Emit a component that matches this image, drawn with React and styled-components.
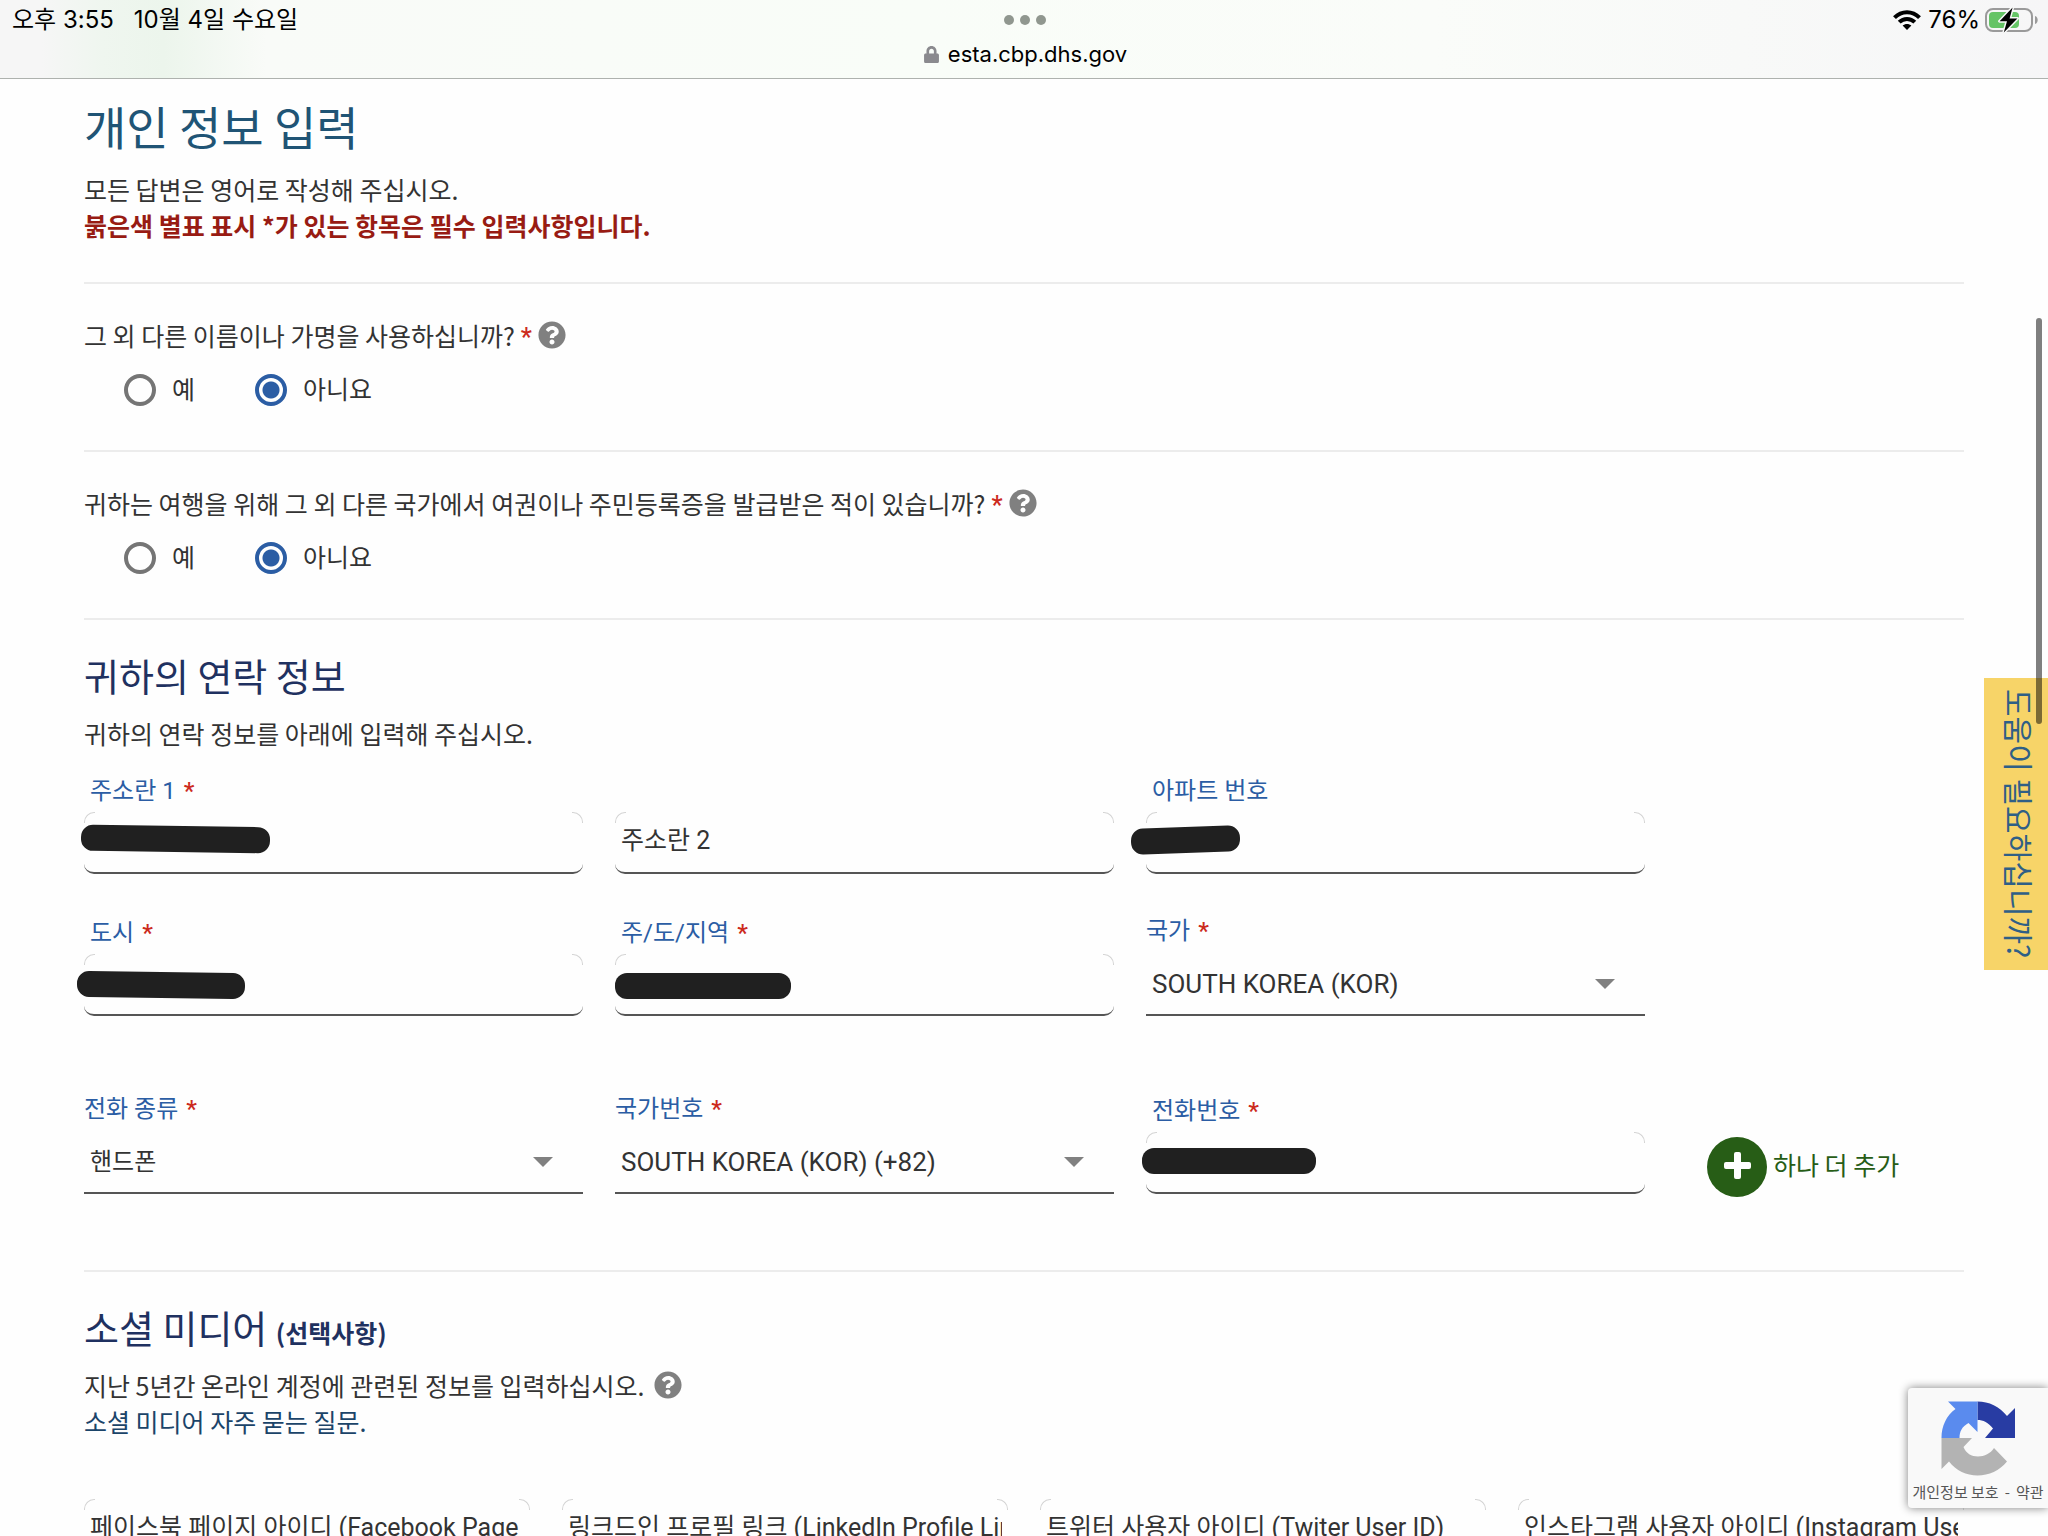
import React, { useState } from 'react';
import styled, { createGlobalStyle } from 'styled-components';
import { FaLock, FaQuestionCircle } from 'react-icons/fa';

const socialFields = [
  { id: 'facebook', text: '페이스북 페이지 아이디 (Facebook Page ID)' },
  { id: 'linkedin', text: '링크드인 프로필 링크 (LinkedIn Profile Link)' },
  { id: 'twitter', text: '트위터 사용자 아이디 (Twiter User ID)' },
  { id: 'instagram', text: '인스타그램 사용자 아이디 (Instagram User ID)' },
];

function StatusBar() {
  return (
    <TopBar>
      <StatusRow>
        <Clock>
          <span>오후 3:55</span>
          <span>10월 4일 수요일</span>
        </Clock>
        <Dots>
          <i />
          <i />
          <i />
        </Dots>
        <Indicators>
          <svg width="28" height="20" viewBox="0 0 28 20">
            <g fill="none" stroke="#000" strokeWidth="4">
              <path d="M1.5 7.6C8.5 0.4 19.5 0.4 26.5 7.6" />
              <path d="M6.2 12.2C10.6 7.8 17.4 7.8 21.8 12.2" />
            </g>
            <path d="M14 20L9.6 15.6C12 13.4 16 13.4 18.4 15.6Z" />
          </svg>
          <span>76%</span>
          <svg width="53" height="26" viewBox="0 0 53 26">
            <rect x="1" y="2" width="46" height="22" rx="7" fill="none" stroke="#9a9a9a" strokeWidth="2" />
            <path d="M50 9C53.6 10 53.6 16 50 17Z" fill="#9a9a9a" />
            <rect x="4" y="5" width="30" height="16" rx="4" fill="#65c466" />
            <path
              d="M27.6 0.6L14.6 14.2H22L18.8 25.4L32.4 11.4H24.6Z"
              stroke="#f9faf9"
              strokeWidth="3"
              paintOrder="stroke"
              strokeLinejoin="round"
            />
          </svg>
        </Indicators>
      </StatusRow>
      <Address>
        <FaLock size={17} color="#8a8a8e" />
        esta.cbp.dhs.gov
      </Address>
    </TopBar>
  );
}

function YesNo({ name, question }) {
  const [value, setValue] = useState('no');

  return (
    <Question aria-label={question}>
      <Legend>
        <span>
          {question}
          <Star>*</Star>
        </span>
        <FaQuestionCircle size={28} color="#808080" />
      </Legend>
      <Options>
        <Option>
          <Radio name={name} checked={value === 'yes'} onChange={() => setValue('yes')} />
          <span>예</span>
        </Option>
        <Option>
          <Radio name={name} checked={value === 'no'} onChange={() => setValue('no')} />
          <span>아니요</span>
        </Option>
      </Options>
    </Question>
  );
}

function TextField({ id, label, required, placeholder, mark }) {
  return (
    <Field>
      {label && (
        <Label htmlFor={id}>
          {label}
          {required && <Star>*</Star>}
        </Label>
      )}
      <InputBox>
        <Input id={id} placeholder={placeholder} aria-label={label ? undefined : placeholder} />
        {mark && <Mark {...mark} />}
      </InputBox>
    </Field>
  );
}

function SelectField({ id, label, value, size }) {
  return (
    <Field>
      <Label htmlFor={id} $select>
        {label}
        <Star>*</Star>
      </Label>
      <SelectBox>
        <Select id={id} $size={size}>
          <option>{value}</option>
        </Select>
      </SelectBox>
    </Field>
  );
}

function Recaptcha() {
  return (
    <Badge>
      <svg width="74" height="75" viewBox="0 0 74 75">
        <path d="M74 37V7L66 15C58.500 5.500 48 0.500 36.500 0.500V19C42 19 47.500 21.500 52 27.500L44 37Z" fill="#283ca3" />
        <path d="M36.500 0.500H7L14.500 8C5.500 14.500 0.500 25 0.500 37H18.500C18.500 30.500 21 25.500 27.500 22L36.500 31Z" fill="#5a8bee" />
        <path d="M0.500 37V68L8 60.500C15 69.500 25.500 74.500 36.500 74.500C48 74.500 58.500 69.500 66 60.500L53 47C49.500 52.500 43.500 55.500 37 55.500C30.500 55.500 25 52.500 22.500 46L31 37Z" fill="#b3b3b3" />
      </svg>
      <BadgeText>
        <a href="#privacy">개인정보 보호</a>
        <span>-</span>
        <a href="#terms">약관</a>
      </BadgeText>
    </Badge>
  );
}

function App() {
  return (
    <Screen>
      <GlobalStyle />
      <StatusBar />
      <Content>
        <Title>개인 정보 입력</Title>
        <Text>모든 답변은 영어로 작성해 주십시오.</Text>
        <RequiredNote>붉은색 별표 표시 *가 있는 항목은 필수 입력사항입니다.</RequiredNote>

        <QuestionList>
          <YesNo name="alias" question="그 외 다른 이름이나 가명을 사용하십니까?" />
          <YesNo
            name="passport"
            question="귀하는 여행을 위해 그 외 다른 국가에서 여권이나 주민등록증을 발급받은 적이 있습니까?"
          />
        </QuestionList>

        <Section>
          <Heading>귀하의 연락 정보</Heading>
          <Text>귀하의 연락 정보를 아래에 입력해 주십시오.</Text>
          <AddressGrid>
            <TextField
              id="address1"
              label="주소란 1"
              required
              mark={{ $top: 14, $left: -3, $width: 189, $angle: 0.8 }}
            />
            <TextField id="address2" placeholder="주소란 2" />
            <TextField id="apartment" label="아파트 번호" mark={{ $top: 15, $left: -15, $width: 109, $angle: -2 }} />
          </AddressGrid>
          <AddressGrid $gap={43}>
            <TextField id="city" label="도시" required mark={{ $top: 18, $left: -7, $width: 168, $angle: 0.8 }} />
            <TextField id="state" label="주/도/지역" required mark={{ $top: 19, $left: 0, $width: 176 }} />
            <SelectField id="country" label="국가" value="SOUTH KOREA (KOR)" />
          </AddressGrid>
          <AddressGrid $gap={79}>
            <SelectField id="phoneType" label="전화 종류" value="핸드폰" size={24} />
            <SelectField id="dialCode" label="국가번호" value="SOUTH KOREA (KOR) (+82)" />
            <TextField id="phone" label="전화번호" required mark={{ $top: 16, $left: -4, $width: 174 }} />
            <AddButton type="button">
              <PlusCircle>
                <svg width="27" height="27" viewBox="0 0 27 27" fill="currentColor">
                  <rect x="10" y="0" width="7" height="27" rx="2" />
                  <rect x="0" y="10" width="27" height="7" rx="2" />
                </svg>
              </PlusCircle>
              하나 더 추가
            </AddButton>
          </AddressGrid>
        </Section>

        <Section $ruled>
          <Heading>
            소셜 미디어 <small>(선택사항)</small>
          </Heading>
          <Text>
            지난 5년간 온라인 계정에 관련된 정보를 입력하십시오.
            <FaQuestionCircle size={28} color="#808080" />
          </Text>
          <FaqLink href="#faq">소셜 미디어 자주 묻는 질문.</FaqLink>
          <SocialGrid>
            {socialFields.map((field) => (
              <TextField key={field.id} id={field.id} placeholder={field.text} />
            ))}
          </SocialGrid>
        </Section>
      </Content>
      <HelpTab type="button">도움이 필요하십니까?</HelpTab>
      <ScrollThumb />
      <Recaptcha />
    </Screen>
  );
}

const GlobalStyle = createGlobalStyle`
  * {
    box-sizing: border-box;
  }

  body {
    margin: 0;
    background: #fefefe;
    color: #333;
    font-family: 'Noto Sans CJK KR', Roboto, sans-serif;
    font-size: 25px;
    line-height: 36px;
  }
`;

const Screen = styled.div`
  position: relative;
  display: flex;
  flex-direction: column;
  height: 100vh;
  overflow: hidden;
`;

const TopBar = styled.header`
  flex: none;
  padding: 4px 10px 8px 12px;
  border-bottom: 1px solid #aeb2ae;
  background: linear-gradient(90deg, #f6f6f6 2%, #eff6ef 5%, #ecf5ec 8%, #f9fbf8 13%, #f9fdf8 45%, #fafcf9 70%, #f6f6f7);
  color: #000;
  font-family: Inter, 'Noto Sans CJK KR', sans-serif;
`;

const StatusRow = styled.div`
  display: grid;
  grid-template-columns: 1fr auto 1fr;
  align-items: center;
  font-size: 24px;
  line-height: 32px;
`;

const Clock = styled.div`
  display: flex;
  gap: 20px;
`;

const Dots = styled.div`
  display: flex;
  gap: 6px;

  i {
    width: 10px;
    height: 10px;
    border-radius: 50%;
    background: #90978f;
  }
`;

const Indicators = styled.div`
  display: flex;
  align-items: center;
  justify-content: flex-end;

  span {
    margin: 0 5px 0 7px;
  }
`;

const Address = styled.div`
  display: flex;
  align-items: center;
  justify-content: center;
  gap: 8px;
  padding-top: 2px;
  font-size: 22px;
  line-height: 32px;
`;

const Content = styled.main`
  flex: 1;
  min-height: 0;
  padding: 18px 84px 0;
  overflow-y: auto;
  scrollbar-width: none;
`;

const Title = styled.h1`
  margin: 0 0 18px;
  color: #205475;
  font-size: 46px;
  font-weight: 400;
  line-height: 56px;
`;

const Text = styled.p`
  display: flex;
  align-items: center;
  gap: 10px;
  margin: 0;
`;

const RequiredNote = styled(Text)`
  color: #981b13;
  font-weight: 700;
`;

const QuestionList = styled.div`
  margin-top: 39px;
  border-bottom: 2px solid #ececec;
`;

const Question = styled.div.attrs({ role: 'radiogroup' })`
  padding: 33px 0 44px;
  border-top: 2px solid #ececec;
`;

const Legend = styled.div`
  display: flex;
  align-items: center;
  gap: 6px;
`;

const Star = styled.span`
  margin-left: 6px;
  color: #cc2a1d;
  font-family: Roboto, sans-serif;
  font-weight: 500;
  line-height: 1;
`;

const Options = styled.div`
  display: flex;
  gap: 60px;
  margin: 21px 0 0 40px;
`;

const Option = styled.label`
  display: flex;
  gap: 16px;
  height: 32px;
  line-height: 28px;
`;

const Radio = styled.input.attrs({ type: 'radio' })`
  appearance: none;
  width: 32px;
  height: 32px;
  margin: 0;
  border: 4px solid #757575;
  border-radius: 50%;

  &:checked {
    border-color: #2b5da4;
    background: radial-gradient(circle, #2b5da4 8px, transparent 9px);
  }
`;

const Section = styled.section`
  margin-top: ${({ $ruled }) => ($ruled ? '76px' : '0')};
  padding-top: 31px;
  border-top: ${({ $ruled }) => ($ruled ? '2px solid #ececec' : 'none')};
`;

const Heading = styled.h2`
  margin: 0 0 16px;
  color: #1f3160;
  font-size: 38px;
  font-weight: 400;
  line-height: 48px;

  small {
    font-size: 25px;
    font-weight: 700;
    line-height: 1;
  }
`;

const AddressGrid = styled.div`
  display: grid;
  grid-template-columns: repeat(3, minmax(0, 499fr)) minmax(0, 287fr);
  align-items: end;
  column-gap: 32px;
  margin-top: ${({ $gap = 26 }) => $gap}px;
`;

const SocialGrid = styled.div`
  display: grid;
  grid-template-columns: repeat(4, minmax(0, 1fr));
  gap: 32px;
  margin-top: 60px;
`;

const Field = styled.div`
  display: flex;
  flex-direction: column;
`;

const Label = styled.label`
  margin-bottom: ${({ $select }) => ($select ? '9px' : '7px')};
  padding-left: ${({ $select }) => ($select ? '0' : '6px')};
  color: #2b5da4;
  font-family: Roboto, 'Noto Sans CJK KR', sans-serif;
  font-size: 24px;
  line-height: 28px;

  ${Star} {
    margin-left: 8px;
  }
`;

const InputBox = styled.div`
  position: relative;

  &::before,
  &::after {
    content: '';
    position: absolute;
    top: 0;
    width: 10px;
    height: 10px;
    border: 0 solid #d4d4d4;
    border-top-width: 1px;
  }

  &::before {
    left: 0;
    border-left-width: 1px;
    border-radius: 10px 0 0 0;
  }

  &::after {
    right: 0;
    border-right-width: 1px;
    border-radius: 0 10px 0 0;
  }
`;

const Input = styled.input`
  display: block;
  width: 100%;
  height: 62px;
  padding: 0 6px 3px;
  border: none;
  border-bottom: 2px solid #555;
  border-radius: 10px;
  outline: none;
  background: transparent;
  color: #333;
  font-family: Roboto, 'Noto Sans CJK KR', sans-serif;
  font-size: 25px;

  &::placeholder {
    color: #333;
    opacity: 1;
  }
`;

// marker stroke over a filled-in value
const Mark = styled.span`
  position: absolute;
  top: ${({ $top }) => $top}px;
  left: ${({ $left }) => $left}px;
  width: ${({ $width }) => $width}px;
  height: 26px;
  border-radius: 12px;
  background: #202020;
  transform: rotate(${({ $angle = 0 }) => $angle}deg);
`;

const SelectBox = styled.div`
  position: relative;

  &::after {
    content: '';
    position: absolute;
    top: 25px;
    right: 30px;
    border: 10px solid transparent;
    border-top-color: #808080;
    border-bottom: none;
    pointer-events: none;
  }
`;

const Select = styled.select`
  appearance: none;
  display: block;
  width: 100%;
  height: 62px;
  padding: 0 60px 0 6px;
  border: none;
  border-bottom: 2px solid #555;
  border-radius: 0;
  outline: none;
  background: transparent;
  color: #333;
  font-family: Roboto, 'Noto Sans CJK KR', sans-serif;
  font-size: ${({ $size = 26 }) => $size}px;
`;

const AddButton = styled.button`
  display: flex;
  align-items: flex-start;
  gap: 6px;
  margin-bottom: -3px;
  padding: 0 0 0 30px;
  border: none;
  background: none;
  color: #275d16;
  font-family: inherit;
  font-size: 25px;
  line-height: 54px;
  white-space: nowrap;
  cursor: pointer;
`;

const PlusCircle = styled.span`
  display: flex;
  align-items: center;
  justify-content: center;
  width: 60px;
  height: 60px;
  padding-bottom: 4px;
  border-radius: 50%;
  background: #275d16;
  color: #fff;
`;

const FaqLink = styled.a`
  display: block;
  color: #1b4469;
  text-decoration: none;
`;

const HelpTab = styled.button`
  position: absolute;
  top: 678px;
  right: 0;
  width: 64px;
  height: 292px;
  padding: 0 0 0 8px;
  border: none;
  background: #f7d468;
  color: #2f5f86;
  font-family: inherit;
  font-size: 30px;
  line-height: 56px;
  text-orientation: sideways;
  writing-mode: vertical-rl;
  cursor: pointer;
`;

const ScrollThumb = styled.div`
  position: absolute;
  top: 318px;
  right: 6px;
  width: 6px;
  height: 406px;
  border-radius: 3px;
  background: rgba(0, 0, 0, 0.5);
`;

const Badge = styled.aside`
  position: absolute;
  right: 0;
  bottom: 28px;
  display: flex;
  flex-direction: column;
  align-items: center;
  width: 140px;
  height: 120px;
  padding-top: 13px;
  border-radius: 4px 0 0 4px;
  background: #f9f9f9;
  box-shadow: 0 0 10px #808080;
`;

const BadgeText = styled.div`
  display: flex;
  gap: 6px;
  margin-top: 4px;
  color: #555;
  font-size: 15px;
  line-height: 24px;
  white-space: nowrap;

  a {
    color: inherit;
    text-decoration: none;
  }
`;

export default App;
